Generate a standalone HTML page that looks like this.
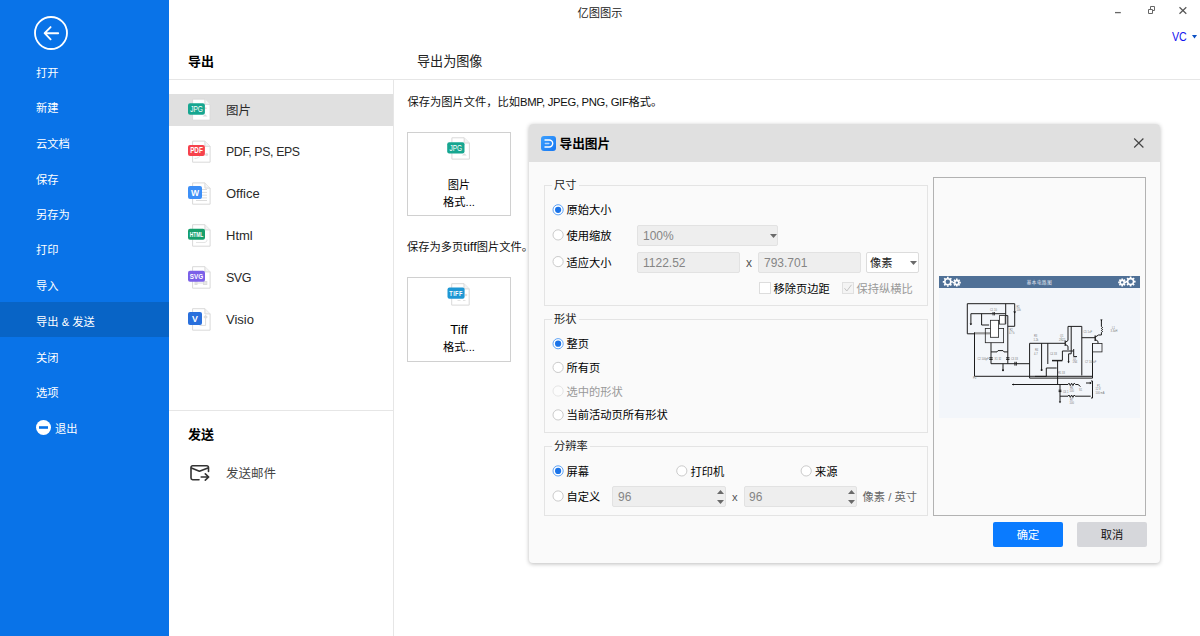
<!DOCTYPE html>
<html lang="zh-CN">
<head>
<meta charset="utf-8">
<title>亿图图示</title>
<style>
*{box-sizing:border-box;margin:0;padding:0}
html,body{width:1200px;height:636px;overflow:hidden;background:#fff}
body{position:relative;font-family:"Liberation Sans","Noto Sans CJK SC",sans-serif;font-size:11.25px;color:#000}
.abs{position:absolute}
.t{position:absolute;white-space:nowrap;line-height:20px;height:20px}
/* sidebar */
#side{left:0;top:0;width:169px;height:636px;background:#0973E8}
#side .t{color:#fff;left:36px;font-size:11.25px;margin-top:1px}
#side .sel{left:0;top:302px;width:169px;height:34.5px;background:#0864C6}
/* second column */
#col2{left:169px;top:0;width:225px;height:636px}
.hline{background:#E6E6E6;height:1px}
.vline{background:#E6E6E6;width:1px}
.it{font-size:13px;color:#2a2a2a;left:226px}
.h{font-size:13px;font-weight:bold;color:#000}
/* dialog */
#dlg{left:529px;top:124px;width:631px;height:438.5px;background:#FAFAFA;border-radius:4px;box-shadow:0 1px 4px rgba(0,0,0,.27)}
#dlg .bar{left:0;top:0;width:631px;height:38px;background:#E0E0E0;border-radius:4px 4px 0 0}
.grp{border:1px solid #E4E4E4;background:#FAFAFA}
.lg{background:#FAFAFA;padding:0 2px;color:#222}
.radio{width:11px;height:11px;border-radius:50%;border:1px solid #ABABAB;background:#fff}
.radio.on{border-color:#1A73E8}
.radio.on::after{content:"";position:absolute;left:2px;top:2px;width:5px;height:5px;border-radius:50%;background:#1A73E8}
.radio.dis{border-color:#DCDCDC}
.inp{background:#EEEEEE;border:1px solid #E2E2E2;border-radius:2px;color:#858585;font-size:12px;line-height:20px;padding-left:5px;height:21px}
.btn{height:25px;line-height:26px;text-align:center;font-size:11.25px;border-radius:2px}
</style>
</head>
<body>
<!-- SIDEBAR -->
<div id="side" class="abs">
  <div class="abs sel"></div>
  <svg class="abs" style="left:33px;top:15px" width="36" height="36" viewBox="0 0 36 36" fill="none" stroke="#fff" stroke-width="1.85" stroke-linecap="round" stroke-linejoin="round"><circle cx="18" cy="18" r="16"/><path d="M25.200 18.200H12.500M17.600 12.100L11.600 18.200L17.600 24.300"/></svg>
  <div class="t" style="top:62px">打开</div>
  <div class="t" style="top:97px">新建</div>
  <div class="t" style="top:133px">云文档</div>
  <div class="t" style="top:169px">保存</div>
  <div class="t" style="top:204px">另存为</div>
  <div class="t" style="top:239px">打印</div>
  <div class="t" style="top:275px">导入</div>
  <div class="t" style="top:311px">导出 &amp; 发送</div>
  <div class="t" style="top:347px">关闭</div>
  <div class="t" style="top:382px">选项</div>
  <svg class="abs" style="left:36px;top:420px" width="15" height="15" viewBox="0 0 15 15"><circle cx="7.5" cy="7.5" r="7.5" fill="#fff"/><rect x="3" y="6.2" width="9" height="2.6" fill="#0973E8"/></svg>
  <div class="t" style="top:418px;left:55px">退出</div>
</div>

<!-- TITLE BAR -->
<div class="t" style="left:577.5px;top:3px;color:#222">亿图图示</div>
<svg class="abs" style="left:1110px;top:0" width="90" height="24" viewBox="0 0 90 24" fill="none" stroke="#666" stroke-width="1"><path d="M5 12.600H10.800" stroke-width="1.300"/><path d="M38.500 9.500h4v4h-4zM40.500 9V6.500h4v4H43"/><path d="M69.500 7.300l6.800 6.400M76.300 7.300l-6.800 6.400" stroke-width="1.200" stroke="#555"/></svg>
<div class="t" style="left:1172px;top:26.5px;font-size:12.200px;transform:scaleX(.875);transform-origin:0 50%;color:#1414F0">VC</div>
<svg class="abs" style="left:1191.5px;top:35px" width="5" height="3.500" viewBox="0 0 5 3.500"><path d="M0 0h5L2.500 3.500z" fill="#0C50C4"/></svg>

<!-- COLUMN 2 -->
<div class="t h" style="left:188px;top:52px">导出</div>
<div class="abs hline" style="left:169px;top:79px;width:1031px"></div>
<div class="abs vline" style="left:393px;top:80px;height:556px"></div>
<div class="abs" style="left:169px;top:94px;width:224px;height:32px;background:#E0E0E0"></div>
<div class="t it" style="top:100.5px;font-size:12.5px">图片</div>
<div class="t it" style="top:142px;font-size:12.300px;letter-spacing:-0.35px">PDF, PS, EPS</div>
<div class="t it" style="top:184px">Office</div>
<div class="t it" style="top:226px">Html</div>
<div class="t it" style="top:268px;font-size:12.500px;letter-spacing:-0.5px">SVG</div>
<div class="t it" style="top:310px">Visio</div>
<div class="abs hline" style="left:169px;top:410px;width:224px"></div>
<div class="t h" style="left:188px;top:424.5px">发送</div>
<div class="t it" style="top:464px;color:#444;font-size:12.5px">发送邮件</div>

<svg class="abs" style="left:187px;top:98px" width="26" height="26" viewBox="0 0 26 26"><path d="M5.60 1.10H17.90L23.10 6.30V22.20H5.60z" fill="#fff" stroke="#D9D9D9" stroke-width="1"/><path d="M17.90 1.10v5.20h5.20" fill="#F4F4F4" stroke="#D9D9D9" stroke-width="1"/><g transform="translate(-187 -98)" fill="none" stroke="#DCDCDC" stroke-width="1"><path d="M202.500 116.600l2.600 -2.400l2.400 2.400z" fill="#DDDDDD" stroke="none"/><circle cx="205.800" cy="108.300" r="1" fill="#F3D6D6" stroke="none"/></g><rect x="1.00" y="5.30" width="16.90" height="11.40" rx="2" fill="#17A690"/><text transform="translate(9.45 14.15) scale(0.74 1)" font-family="Liberation Sans, sans-serif" font-weight="normal" font-size="8.8" fill="#fff" text-anchor="middle" letter-spacing="0">JPG</text></svg>
<svg class="abs" style="left:187px;top:140px" width="26" height="26" viewBox="0 0 26 26"><path d="M5.60 1.10H17.90L23.10 6.30V22.20H5.60z" fill="#fff" stroke="#D9D9D9" stroke-width="1"/><path d="M17.90 1.10v5.20h5.20" fill="#F4F4F4" stroke="#D9D9D9" stroke-width="1"/><g transform="translate(-187 -140)" fill="none" stroke="#DCDCDC" stroke-width="1"><path d="M194.500 158.500c3 0 5 -1.500 6.500 -3.500" stroke="#E2E2E2"/><circle cx="206.600" cy="154.600" r="1.500" fill="#DEDEDE" stroke="none"/></g><rect x="1.00" y="5.00" width="16.90" height="11.00" rx="2" fill="#F6424C"/><text transform="translate(9.45 13.47) scale(0.76 1)" font-family="Liberation Sans, sans-serif" font-weight="bold" font-size="8.3" fill="#fff" text-anchor="middle" letter-spacing="0">PDF</text></svg>
<svg class="abs" style="left:187px;top:181px" width="26" height="26" viewBox="0 0 26 26"><path d="M5.60 1.90H17.90L23.10 7.10V23.20H5.60z" fill="#fff" stroke="#D9D9D9" stroke-width="1"/><path d="M17.90 1.90v5.20h5.20" fill="#F4F4F4" stroke="#D9D9D9" stroke-width="1"/><g transform="translate(-187 -181)" fill="none" stroke="#DCDCDC" stroke-width="1"><path d="M202 189.500h5M202 192.400h5M202 195.200h5M202 197.900h5M196 200.500h11"/></g><rect x="1.00" y="5.00" width="14.00" height="13.00" rx="2" fill="#3D8FF7"/><text transform="translate(8.00 14.58) scale(1.0 1)" font-family="Liberation Sans, sans-serif" font-weight="bold" font-size="8.6" fill="#fff" text-anchor="middle" letter-spacing="0">W</text></svg>
<svg class="abs" style="left:187px;top:223px" width="26" height="26" viewBox="0 0 26 26"><path d="M5.60 1.70H17.90L23.10 6.90V23.20H5.60z" fill="#fff" stroke="#D9D9D9" stroke-width="1"/><path d="M17.90 1.70v5.20h5.20" fill="#F4F4F4" stroke="#D9D9D9" stroke-width="1"/><g transform="translate(-187 -223)" fill="none" stroke="#DCDCDC" stroke-width="1"><path d="M196 242.500h8c2 0 3 -1 3 -3" stroke="#E4E4E4"/></g><rect x="1.00" y="5.80" width="17.00" height="11.00" rx="2" fill="#169F6C"/><text transform="translate(9.50 14.06) scale(0.64 1)" font-family="Liberation Sans, sans-serif" font-weight="bold" font-size="7.7" fill="#fff" text-anchor="middle" letter-spacing="0">HTML</text></svg>
<svg class="abs" style="left:187px;top:265px" width="26" height="26" viewBox="0 0 26 26"><path d="M5.60 1.70H17.90L23.10 6.90V23.20H5.60z" fill="#fff" stroke="#D9D9D9" stroke-width="1"/><path d="M17.90 1.70v5.20h5.20" fill="#F4F4F4" stroke="#D9D9D9" stroke-width="1"/><g transform="translate(-187 -265)" fill="none" stroke="#DCDCDC" stroke-width="1"><path d="M197 283h6.500" /><rect x="195" y="281.500" width="2" height="3" fill="#E6E6E6"/><rect x="203.500" y="281.500" width="3.300" height="3" fill="#E6E6E6"/></g><rect x="1.00" y="5.80" width="17.00" height="11.00" rx="2" fill="#7B60E8"/><text transform="translate(9.50 14.06) scale(0.82 1)" font-family="Liberation Sans, sans-serif" font-weight="bold" font-size="7.7" fill="#fff" text-anchor="middle" letter-spacing="0">SVG</text></svg>
<svg class="abs" style="left:187px;top:307px" width="26" height="26" viewBox="0 0 26 26"><path d="M5.60 1.70H17.90L23.10 6.90V23.20H5.60z" fill="#fff" stroke="#D9D9D9" stroke-width="1"/><path d="M17.90 1.70v5.20h5.20" fill="#F4F4F4" stroke="#D9D9D9" stroke-width="1"/><g transform="translate(-187 -307)" fill="none" stroke="#DCDCDC" stroke-width="1"><path d="M205.600 319v6.400h-6"/><path d="M205.600 314.800l2.200 2.200l-2.200 2.200l-2.200 -2.200z" fill="#DCDCDC" stroke="none"/></g><rect x="1.00" y="5.00" width="14.00" height="13.00" rx="2" fill="#2A70DC"/><text transform="translate(8.00 14.51) scale(1.05 1)" font-family="Liberation Sans, sans-serif" font-weight="bold" font-size="8.4" fill="#fff" text-anchor="middle" letter-spacing="0">V</text></svg>
<svg class="abs" style="left:188px;top:462px" width="24" height="22" viewBox="0 0 24 22" fill="none" stroke="#333" stroke-width="1.6" stroke-linecap="round" stroke-linejoin="round"><path d="M11 17.700H4.600a1.600 1.600 0 0 1-1.600-1.600V5.400a1.600 1.600 0 0 1 1.600-1.600h14.300a1.600 1.600 0 0 1 1.600 1.600V9.500"/><path d="M3.400 6l8 3.300l8.600-3.300"/><path d="M13.200 15H20.600M17.300 11.800l3.400 3.200l-3.400 3.200"/></svg>
<!-- MAIN -->
<div class="t" style="left:417px;top:52px;font-size:13.1px;color:#222">导出为图像</div>
<div class="t" style="left:407.5px;top:92px;color:#111">保存为图片文件，比如<span style="letter-spacing:-0.3px">BMP, JPEG, PNG, GIF</span>格式。</div>
<div class="abs" style="left:407px;top:132px;width:104px;height:84px;border:1px solid #D0D0D0;background:#fff"></div>
<div class="t" style="left:407px;width:104px;text-align:center;top:175px">图片</div>
<div class="t" style="left:407px;width:104px;text-align:center;top:192px">格式...</div>
<div class="t" style="left:407px;top:237px;color:#111">保存为多页<span style="font-size:13px">tiff</span>图片文件。</div>
<div class="abs" style="left:407px;top:277px;width:104px;height:85px;border:1px solid #D0D0D0;background:#fff"></div>
<div class="t" style="left:407px;width:104px;text-align:center;top:319.5px;font-size:13px">Tiff</div>
<div class="t" style="left:407px;width:104px;text-align:center;top:336.5px">格式...</div>

<svg class="abs" style="left:446px;top:136px" width="26" height="26" viewBox="0 0 26 26"><path d="M5.90 1.80H18.20L23.40 7.00V23.10H5.90z" fill="#fff" stroke="#D9D9D9" stroke-width="1"/><path d="M18.20 1.80v5.20h5.20" fill="#F4F4F4" stroke="#D9D9D9" stroke-width="1"/><g transform="translate(-446 -136)" fill="none" stroke="#DCDCDC" stroke-width="1"><path d="M461.800 155.600l2.600 -2.400l2.400 2.400z" fill="#DDDDDD" stroke="none"/></g><rect x="1.20" y="6.30" width="17.30" height="11.30" rx="2" fill="#17A690"/><text transform="translate(9.85 15.10) scale(0.74 1)" font-family="Liberation Sans, sans-serif" font-weight="normal" font-size="8.8" fill="#fff" text-anchor="middle" letter-spacing="0">JPG</text></svg>
<svg class="abs" style="left:446px;top:282px" width="26" height="26" viewBox="0 0 26 26"><path d="M5.70 1.70H18.00L23.20 6.90V23.10H5.70z" fill="#fff" stroke="#D9D9D9" stroke-width="1"/><path d="M18.00 1.70v5.20h5.20" fill="#F4F4F4" stroke="#D9D9D9" stroke-width="1"/><g transform="translate(-446 -282)" fill="none" stroke="#DCDCDC" stroke-width="1"><circle cx="466" cy="295" r="1.300" fill="#E6DEDA" stroke="none"/><path d="M457.500 300.500h3M463 300.500h2.500" stroke="#E2E2E2"/></g><rect x="1.50" y="5.60" width="17.10" height="11.20" rx="2" fill="#1E97D4"/><text transform="translate(10.05 13.99) scale(0.72 1)" font-family="Liberation Sans, sans-serif" font-weight="bold" font-size="7.8" fill="#fff" text-anchor="middle" letter-spacing="0.6">TIFF</text></svg>
<!-- DIALOG -->
<div id="dlg" class="abs">
  <div class="abs bar"></div>
  <svg class="abs" style="left:12px;top:11.5px" width="15" height="15" viewBox="0 0 15 15"><defs><linearGradient id="lg1" x1="0" y1="0" x2="1" y2="1"><stop offset="0" stop-color="#3CA0FF"/><stop offset="1" stop-color="#1677F2"/></linearGradient></defs><rect width="15" height="15" rx="3" fill="url(#lg1)"/><path d="M4 4h4.200a3.500 3.500 0 0 1 0 7H4" fill="none" stroke="#fff" stroke-width="1.400" stroke-linecap="round"/><path d="M4.300 7.500h3.600" fill="none" stroke="#fff" stroke-opacity=".65" stroke-width="1.300" stroke-linecap="round"/></svg>
  <div class="t" style="left:30.5px;top:10px;font-size:12.700px;font-weight:bold;color:#000">导出图片</div>
  <svg class="abs" style="left:604px;top:13px" width="12" height="12" viewBox="0 0 12 12"><path d="M1.200 1.500l9.200 9M10.400 1.500l-9.200 9" stroke="#444" stroke-width="1.150" fill="none"/></svg>
  <div class="abs grp" style="left:15px;top:61px;width:384px;height:121px"></div><div class="t lg" style="left:23px;top:51px">尺寸</div>
  <div class="abs grp" style="left:15px;top:195px;width:384px;height:114px"></div><div class="t lg" style="left:23px;top:185px">形状</div>
  <div class="abs grp" style="left:15px;top:322px;width:384px;height:70px"></div><div class="t lg" style="left:23px;top:312px">分辨率</div>
  <div class="t" style="left:37.5px;top:76px;">原始大小</div>
  <div class="t" style="left:37.5px;top:101.5px;">使用缩放</div>
  <div class="t" style="left:37.5px;top:129px;">适应大小</div>
  <div class="abs inp" style="left:108px;top:101px;width:141px;height:21px;">100%</div>
  <div class="abs inp" style="left:108px;top:128px;width:103px;height:21px;">1122.52</div>
  <div class="t" style="left:217px;top:129px;color:#555;font-size:12px">x</div>
  <div class="abs inp" style="left:229px;top:128px;width:103px;height:21px;">793.701</div>
  <div class="abs inp" style="left:337px;top:128px;width:53px;height:21px;background:#fff;color:#222;border-color:#DCDCDC;padding-left:3px;font-size:11.25px">像素</div>
  <svg class="abs" style="left:240.5px;top:109.80000000000001px" width="7" height="4" viewBox="0 0 7 4"><polygon points="0,0 7,0 3.5,4" fill="#6A6A6A"/></svg>
  <svg class="abs" style="left:380.79999999999995px;top:136.5px" width="7" height="4" viewBox="0 0 7 4"><polygon points="0,0 7,0 3.5,4" fill="#6A6A6A"/></svg>
  <div class="abs" style="left:230px;top:158px;width:12px;height:12px;background:#fff;border:1px solid #DDD"></div>
  <div class="t" style="left:244.5px;top:154.5px;">移除页边距</div>
  <div class="abs" style="left:313px;top:158px;width:12px;height:12px;background:#F4F4F4;border:1px solid #E0E0E0"></div>
  <svg class="abs" style="left:313px;top:158px" width="12" height="12" viewBox="0 0 12 12"><path d="M2.500 6.200l2.300 2.800l4.700-6.200" fill="none" stroke="#C4C4C4" stroke-width="1"/></svg>
  <div class="t" style="left:327.5px;top:154.5px;color:#999">保持纵横比</div>
  <div class="t" style="left:37.5px;top:210px;">整页</div>
  <div class="t" style="left:37.5px;top:234px;">所有页</div>
  <div class="t" style="left:37.5px;top:258px;color:#999">选中的形状</div>
  <div class="t" style="left:37.5px;top:281px;">当前活动页所有形状</div>
  <div class="t" style="left:37.5px;top:337.5px;">屏幕</div>
  <div class="t" style="left:161.5px;top:337.5px;">打印机</div>
  <div class="t" style="left:286px;top:337.5px;">来源</div>
  <div class="t" style="left:37.5px;top:363px;">自定义</div>
  <div class="abs inp" style="left:83px;top:362px;width:114px;height:21px;">96</div>
  <svg class="abs" style="left:187.79999999999995px;top:366.0px" width="7" height="4" viewBox="0 0 7 4"><polygon points="0,4 7,4 3.5,0" fill="#6A6A6A"/></svg>
  <svg class="abs" style="left:187.79999999999995px;top:375.5px" width="7" height="4" viewBox="0 0 7 4"><polygon points="0,0 7,0 3.5,4" fill="#6A6A6A"/></svg>
  <div class="t" style="left:203px;top:363px;color:#555">x</div>
  <div class="abs inp" style="left:215px;top:362px;width:113px;height:21px;padding-left:4px">96</div>
  <svg class="abs" style="left:319.20000000000005px;top:366.0px" width="7" height="4" viewBox="0 0 7 4"><polygon points="0,4 7,4 3.5,0" fill="#6A6A6A"/></svg>
  <svg class="abs" style="left:319.20000000000005px;top:375.5px" width="7" height="4" viewBox="0 0 7 4"><polygon points="0,0 7,0 3.5,4" fill="#6A6A6A"/></svg>
  <div class="t" style="left:333.5px;top:363px;color:#666">像素 / 英寸</div>
  <div class="abs" style="left:404px;top:53px;width:213px;height:338.5px;border:1px solid #B2B2B2;background:#FAFAFA"></div>
  <svg class="abs" style="left:410px;top:152px" width="201" height="142" viewBox="0 0 201 142"><rect x="0" y="0" width="201" height="12" fill="#4F7096"/><rect x="0" y="12" width="201" height="130" fill="#F3F6FA"/><circle cx="8.8" cy="5.8" r="3.0" fill="none" stroke="#fff" stroke-width="1.600"/><path d="M12.20 5.80L13.80 5.80M11.20 8.20L12.34 9.34M8.80 9.20L8.80 10.80M6.40 8.20L5.26 9.34M5.40 5.80L3.80 5.80M6.40 3.40L5.26 2.26M8.80 2.40L8.80 0.80M11.20 3.40L12.34 2.26" stroke="#fff" stroke-width="1.700"/><circle cx="17.8" cy="6.6" r="2.0" fill="none" stroke="#fff" stroke-width="1.600"/><path d="M20.20 6.60L21.80 6.60M19.50 8.30L20.63 9.43M17.80 9.00L17.80 10.60M16.10 8.30L14.97 9.43M15.40 6.60L13.80 6.60M16.10 4.90L14.97 3.77M17.80 4.20L17.80 2.60M19.50 4.90L20.63 3.77" stroke="#fff" stroke-width="1.700"/><circle cx="183.2" cy="6.4" r="2.0" fill="none" stroke="#fff" stroke-width="1.600"/><path d="M185.60 6.40L187.20 6.40M184.90 8.10L186.03 9.23M183.20 8.80L183.20 10.40M181.50 8.10L180.37 9.23M180.80 6.40L179.20 6.40M181.50 4.70L180.37 3.57M183.20 4.00L183.20 2.40M184.90 4.70L186.03 3.57" stroke="#fff" stroke-width="1.700"/><circle cx="191.6" cy="5.6" r="3.0" fill="none" stroke="#fff" stroke-width="1.600"/><path d="M195.00 5.60L196.60 5.60M194.00 8.00L195.14 9.14M191.60 9.00L191.60 10.60M189.20 8.00L188.06 9.14M188.20 5.60L186.60 5.60M189.20 3.20L188.06 2.06M191.60 2.20L191.60 0.60M194.00 3.20L195.14 2.06" stroke="#fff" stroke-width="1.700"/><text x="100.5" y="7.600000000000023" font-family="Liberation Sans, Noto Sans CJK SC, sans-serif" font-size="4.500" fill="#E6ECF3" text-anchor="middle" letter-spacing="0.600">基本电路图</text><path d="M28.3 57.8L28.3 27.7L75.7 27.7L75.7 50.3L69.0 50.3" stroke="#1c1c1c" stroke-width="1" fill="none"/><path d="M66.7 27.7L66.7 48.1" stroke="#1c1c1c" stroke-width="1" fill="none"/><path d="M31.9 48.8L31.9 37.7L66.5 37.7" stroke="#1c1c1c" stroke-width="1" fill="none"/><path d="M42.6 37.7L42.6 49.0L50.1 49.0" stroke="#1c1c1c" stroke-width="1" fill="none"/><path d="M28.3 57.8L35.6 57.8" stroke="#1c1c1c" stroke-width="1" fill="none"/><path d="M35.6 57.3L51.4 57.3" stroke="#999" stroke-width="2.2" fill="none"/><path d="M35.5 56.3L35.5 100.3L153.5 100.3" stroke="#1c1c1c" stroke-width="1" fill="none"/><rect x="46.3" y="52.5" width="18.300" height="14.200" fill="none" stroke="#222" stroke-width="0.800"/><rect x="51.4" y="44.3" width="8.200" height="17" fill="#fff" stroke="#222" stroke-width="0.800"/><rect x="60.4" y="39.6" width="5.800" height="8.500" fill="#fff" stroke="#222" stroke-width="0.800"/><path d="M66.5 39.6L68.8 39.6L68.8 87.7" stroke="#1c1c1c" stroke-width="1" fill="none"/><path d="M52.0 66.7L52.0 87.7L90.6 87.7" stroke="#1c1c1c" stroke-width="1" fill="none"/><path d="M52.0 75.9L58.0 75.9L59.0 74.6L64.0 74.6L65.0 75.9L68.8 75.9" stroke="#1c1c1c" stroke-width="1" fill="none"/><path d="M50.3 81.8L53.7 81.8" stroke="#1c1c1c" stroke-width="1" fill="none"/><path d="M50.3 83.4L53.7 83.4" stroke="#1c1c1c" stroke-width="1" fill="none"/><path d="M67.1 81.8L70.5 81.8" stroke="#1c1c1c" stroke-width="1" fill="none"/><path d="M67.1 83.4L70.5 83.4" stroke="#1c1c1c" stroke-width="1" fill="none"/><path d="M64.0 87.7L64.0 94.0" stroke="#1c1c1c" stroke-width="1" fill="none"/><circle cx="64.0" cy="94.2" r="1" fill="#111"/><path d="M75.9 85.8L75.9 89.6" stroke="#1c1c1c" stroke-width="1" fill="none"/><path d="M77.3 85.8L77.3 89.6" stroke="#1c1c1c" stroke-width="1" fill="none"/><path d="M54.0 36.0L54.0 39.4" stroke="#222" stroke-width="0.9" fill="none"/><path d="M55.4 36.0L55.4 39.4" stroke="#222" stroke-width="0.9" fill="none"/><path d="M74.2 35.6h3l-1.500 2z" fill="#111"/><path d="M30.6 47.5h2.600l-1.300 1.800z" fill="#111"/><path d="M90.6 102.1L90.6 67.3L126.2 67.3" stroke="#1c1c1c" stroke-width="1" fill="none"/><path d="M90.6 102.1L153.5 102.1L153.5 67.4" stroke="#1c1c1c" stroke-width="1" fill="none"/><path d="M102.6 67.3L102.6 93.8" stroke="#1c1c1c" stroke-width="1" fill="none"/><circle cx="102.6" cy="94.0" r="1" fill="#111"/><path d="M108.8 67.3L108.8 88.0" stroke="#1c1c1c" stroke-width="1" fill="none"/><path d="M96.0 100.4L107.3 100.4L107.3 92.0L117.7 92.0" stroke="#1c1c1c" stroke-width="1" fill="none"/><path d="M113.0 84.6L123.4 84.6" stroke="#222" stroke-width="1.5" fill="none"/><path d="M123.4 84.4L123.4 75.0L134.7 75.0" stroke="#1c1c1c" stroke-width="1" fill="none"/><path d="M118.6 84.4L118.6 108.0" stroke="#1c1c1c" stroke-width="1" fill="none"/><path d="M126.2 64.5L126.2 70.0" stroke="#222" stroke-width="1.2" fill="none"/><path d="M126.2 66.5L129.0 64.5L129.0 50.4L142.8 50.4L142.8 99.5" stroke="#1c1c1c" stroke-width="1" fill="none"/><path d="M126.2 68.2L129.0 70.2L129.0 74.0" stroke="#1c1c1c" stroke-width="1" fill="none"/><path d="M132.2 50.4L132.2 77.8L129.6 77.8L129.6 86.0" stroke="#1c1c1c" stroke-width="1" fill="none"/><path d="M128.4 85.5h2.400l-1.200 1.800z" fill="#111"/><path d="M134.7 73.0L134.7 80.6L138.0 80.6" stroke="#1c1c1c" stroke-width="1" fill="none"/><path d="M142.8 61.7L156.4 61.7" stroke="#1c1c1c" stroke-width="1" fill="none"/><rect x="153.5" y="67.4" width="9.500" height="8.500" fill="none" stroke="#222" stroke-width="0.800"/><path d="M156.2 59.5L156.2 65.0" stroke="#222" stroke-width="1.4" fill="none"/><path d="M156.4 61.0L159.5 59.0L162.4 59.0L162.4 56.5L163.6 55.5L162.4 54.5L163.6 53.5L162.4 52.5L163.6 51.5L162.4 50.5L162.4 43.8" stroke="#1c1c1c" stroke-width="1" fill="none"/><path d="M156.4 63.4L159.0 65.4L159.0 67.4" stroke="#1c1c1c" stroke-width="1" fill="none"/><path d="M161.2 43.6h2.400l-1.200 1.600z" fill="#111"/><path d="M73.2 108.5L129.0 108.5L130.0 107.2L131.3 109.6L132.6 107.2L133.9 109.6L135.2 107.2L136.6 108.5L139.0 108.5L141.5 110.5" stroke="#1c1c1c" stroke-width="1" fill="none"/><path d="M73.0 108.5l1.800 -1v2z" fill="#111"/><path d="M147.0 107.0L152.0 107.0" stroke="#1c1c1c" stroke-width="1" fill="none"/><path d="M152.8 107.0l-2 -1.200v2.400z" fill="#111"/><path d="M152.0 105.0L153.5 105.0L153.5 122.0L152.0 122.0" stroke="#1c1c1c" stroke-width="1" fill="none"/><path d="M121.0 108.5L121.0 126.0" stroke="#1c1c1c" stroke-width="1" fill="none"/><path d="M119.8 125.5h2.400l-1.200 1.800z" fill="#111"/><path d="M121.0 120.2L129.0 120.2L130.0 119.0L131.3 121.4L132.6 119.0L133.9 121.4L135.2 119.0L136.2 120.2L151.7 120.2" stroke="#1c1c1c" stroke-width="1" fill="none"/><path d="M119.6 114.2L122.4 114.2" stroke="#1c1c1c" stroke-width="1" fill="none"/><path d="M119.6 115.6L122.4 115.6" stroke="#1c1c1c" stroke-width="1" fill="none"/><text x="51.0" y="34.5" font-family="Liberation Sans, sans-serif" font-size="2.6" fill="#777">C1 10</text><text x="77.5" y="32.0" font-family="Liberation Sans, sans-serif" font-size="2.6" fill="#777">R1</text><text x="77.5" y="35.0" font-family="Liberation Sans, sans-serif" font-size="2.6" fill="#777">10k</text><text x="70.5" y="55.0" font-family="Liberation Sans, sans-serif" font-size="2.6" fill="#777">R2</text><text x="70.0" y="58.0" font-family="Liberation Sans, sans-serif" font-size="2.6" fill="#777">4.7 k</text><text x="38.5" y="84.0" font-family="Liberation Sans, sans-serif" font-size="2.6" fill="#777">C2 100pF</text><text x="55.5" y="83.5" font-family="Liberation Sans, sans-serif" font-size="2.6" fill="#777">X1 32</text><text x="72.0" y="84.0" font-family="Liberation Sans, sans-serif" font-size="2.6" fill="#777">C3 33</text><text x="95.0" y="61.0" font-family="Liberation Sans, sans-serif" font-size="2.6" fill="#777">R3</text><text x="94.5" y="64.5" font-family="Liberation Sans, sans-serif" font-size="2.6" fill="#777">1.2k</text><text x="96.0" y="75.0" font-family="Liberation Sans, sans-serif" font-size="2.6" fill="#777">R4</text><text x="95.0" y="78.5" font-family="Liberation Sans, sans-serif" font-size="2.6" fill="#777">4.7</text><text x="111.0" y="79.0" font-family="Liberation Sans, sans-serif" font-size="2.6" fill="#777">C4 33</text><text x="121.0" y="61.0" font-family="Liberation Sans, sans-serif" font-size="2.6" fill="#777">Q1</text><text x="120.0" y="64.5" font-family="Liberation Sans, sans-serif" font-size="2.6" fill="#777">2N22</text><text x="144.5" y="57.0" font-family="Liberation Sans, sans-serif" font-size="2.6" fill="#777">C5 1uF</text><text x="146.0" y="86.5" font-family="Liberation Sans, sans-serif" font-size="2.6" fill="#777">C7 100uF</text><text x="173.0" y="52.5" font-family="Liberation Sans, sans-serif" font-size="2.6" fill="#777">L1</text><text x="171.5" y="56.0" font-family="Liberation Sans, sans-serif" font-size="2.6" fill="#777">3.3uH</text><text x="134.0" y="83.5" font-family="Liberation Sans, sans-serif" font-size="2.6" fill="#777">D1</text><text x="133.5" y="87.0" font-family="Liberation Sans, sans-serif" font-size="2.6" fill="#777">1N4</text><text x="119.0" y="98.0" font-family="Liberation Sans, sans-serif" font-size="2.6" fill="#777">R5 33</text><text x="131.0" y="112.5" font-family="Liberation Sans, sans-serif" font-size="2.6" fill="#777">R6</text><text x="130.5" y="115.5" font-family="Liberation Sans, sans-serif" font-size="2.6" fill="#777">100</text><text x="140.0" y="115.0" font-family="Liberation Sans, sans-serif" font-size="2.6" fill="#777">S1</text><text x="158.0" y="110.5" font-family="Liberation Sans, sans-serif" font-size="2.6" fill="#777">P1</text><text x="156.5" y="114.0" font-family="Liberation Sans, sans-serif" font-size="2.6" fill="#777">12 V</text><text x="156.5" y="117.5" font-family="Liberation Sans, sans-serif" font-size="2.6" fill="#777">100 mA</text><text x="131.0" y="124.5" font-family="Liberation Sans, sans-serif" font-size="2.6" fill="#777">R7</text><text x="130.5" y="127.5" font-family="Liberation Sans, sans-serif" font-size="2.6" fill="#777">100</text><text x="124.0" y="117.0" font-family="Liberation Sans, sans-serif" font-size="2.6" fill="#777">C6 1</text><text x="34.0" y="102.6" font-family="Liberation Sans, sans-serif" font-size="2.6" fill="#777">P0</text></svg>
  <svg class="abs" style="left:0;top:0" width="632" height="439" viewBox="0 0 632 439"><circle cx="29.1" cy="85.8" r="5.100" fill="#fff" stroke="#4C97F3" stroke-width="0.900"/><circle cx="29.1" cy="85.8" r="3.100" fill="#1A73E8"/><circle cx="29.1" cy="110.9" r="5.100" fill="#fff" stroke="#C4C4C4" stroke-width="0.900"/><circle cx="29.1" cy="137.6" r="5.100" fill="#fff" stroke="#C4C4C4" stroke-width="0.900"/><circle cx="29.1" cy="219.7" r="5.100" fill="#fff" stroke="#4C97F3" stroke-width="0.900"/><circle cx="29.1" cy="219.7" r="3.100" fill="#1A73E8"/><circle cx="29.1" cy="243.4" r="5.100" fill="#fff" stroke="#C4C4C4" stroke-width="0.900"/><circle cx="29.1" cy="267.0" r="5.100" fill="#FCFCFC" stroke="#E2E2E2" stroke-width="0.900"/><circle cx="29.1" cy="290.9" r="5.100" fill="#fff" stroke="#C4C4C4" stroke-width="0.900"/><circle cx="29.1" cy="346.9" r="5.100" fill="#fff" stroke="#4C97F3" stroke-width="0.900"/><circle cx="29.1" cy="346.9" r="3.100" fill="#1A73E8"/><circle cx="152.8" cy="346.9" r="5.100" fill="#fff" stroke="#C4C4C4" stroke-width="0.900"/><circle cx="277.2" cy="346.9" r="5.100" fill="#fff" stroke="#C4C4C4" stroke-width="0.900"/><circle cx="29.1" cy="372.0" r="5.100" fill="#fff" stroke="#C4C4C4" stroke-width="0.900"/></svg>
  <div class="abs btn" style="left:464px;top:398px;width:70px;background:#0A7BFF;color:#fff">确定</div>
  <div class="abs btn" style="left:548px;top:398px;width:70px;background:#D6D7DB;color:#111">取消</div>
</div>
</body>
</html>
